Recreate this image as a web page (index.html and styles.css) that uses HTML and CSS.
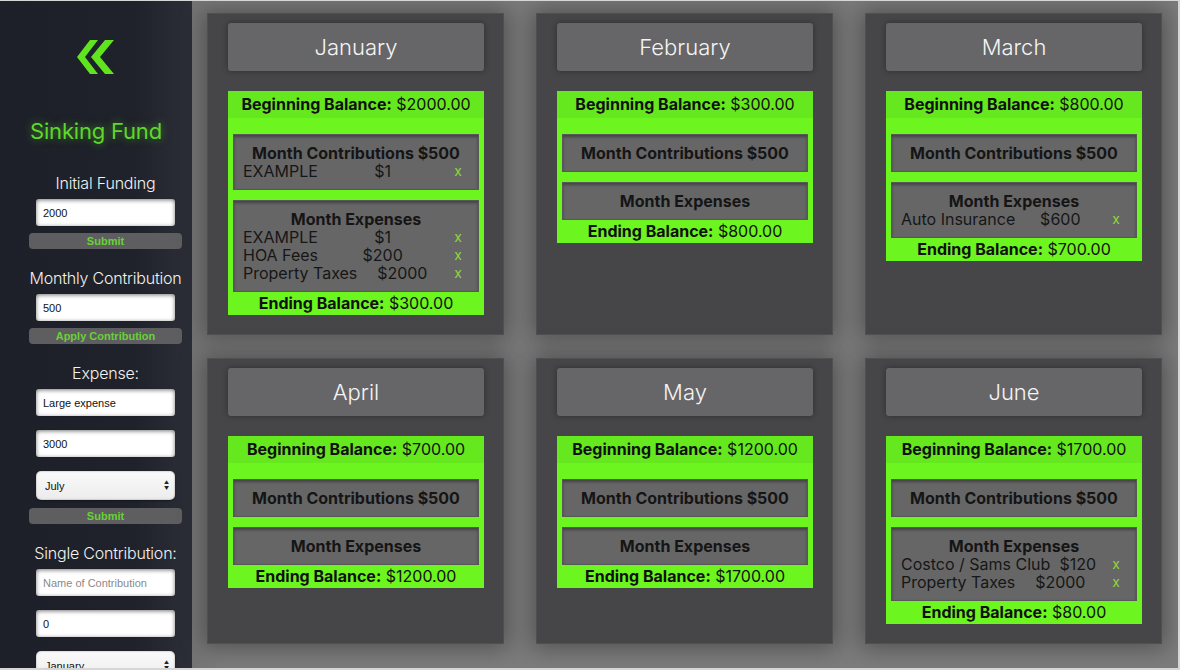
FILE: index.html
```html
<!DOCTYPE html>
<html lang="en">
<head>
<meta charset="utf-8">
<title>Sinking Fund</title>
<link rel="stylesheet" href="styles.css">
</head>
<body>
<div class="app">
  <aside class="sidebar">
    <div class="logo">
      <svg width="38" height="34" viewBox="0 0 38 34" aria-hidden="true">
        <polygon points="13,0 21,0 8,17 21,34 13,34 0,17" fill="#5fe41f"/>
        <polygon points="28,0 37,0 23,17 37,34 28,34 14,17" fill="#5fe41f"/>
      </svg>
    </div>
    <h1 class="brand">Sinking Fund</h1>
    <form class="form">
      <label class="label first">Initial Funding</label>
      <input class="field" type="text" value="2000">
      <button type="button" class="btn">Submit</button>

      <label class="label">Monthly Contribution</label>
      <input class="field" type="text" value="500">
      <button type="button" class="btn">Apply Contribution</button>

      <label class="label">Expense:</label>
      <input class="field" type="text" value="Large expense">
      <input class="field spaced" type="text" value="3000">
      <div class="select-wrap spaced">
        <select class="select"><option>July</option></select>
        <span class="arrows">&#9650;<br>&#9660;</span>
      </div>
      <button type="button" class="btn btn-after-select">Submit</button>

      <label class="label">Single Contribution:</label>
      <input class="field" type="text" placeholder="Name of Contribution">
      <input class="field spaced" type="text" value="0">
      <div class="select-wrap spaced">
        <select class="select"><option>January</option></select>
        <span class="arrows">&#9650;<br>&#9660;</span>
      </div>
    </form>
  </aside>

  <main class="main">
    <section class="card">
      <h2 class="month">January</h2>
      <div class="ledger">
        <div class="begin"><b>Beginning Balance:</b> $2000.00</div>
        <div class="box first-box">
          <div class="box-title">Month Contributions $500</div>
          <div class="row"><span>EXAMPLE</span><span>$1</span><span class="del">x</span></div>
        </div>
        <div class="box">
          <div class="box-title">Month Expenses</div>
          <div class="row"><span>EXAMPLE</span><span>$1</span><span class="del">x</span></div>
          <div class="row"><span>HOA Fees</span><span>$200</span><span class="del">x</span></div>
          <div class="row"><span>Property Taxes</span><span>$2000</span><span class="del">x</span></div>
        </div>
        <div class="end"><b>Ending Balance:</b> $300.00</div>
      </div>
    </section>

    <section class="card">
      <h2 class="month">February</h2>
      <div class="ledger">
        <div class="begin"><b>Beginning Balance:</b> $300.00</div>
        <div class="box first-box">
          <div class="box-title">Month Contributions $500</div>
        </div>
        <div class="box">
          <div class="box-title">Month Expenses</div>
        </div>
        <div class="end"><b>Ending Balance:</b> $800.00</div>
      </div>
    </section>

    <section class="card">
      <h2 class="month">March</h2>
      <div class="ledger">
        <div class="begin"><b>Beginning Balance:</b> $800.00</div>
        <div class="box first-box">
          <div class="box-title">Month Contributions $500</div>
        </div>
        <div class="box">
          <div class="box-title">Month Expenses</div>
          <div class="row"><span>Auto Insurance</span><span>$600</span><span class="del">x</span></div>
        </div>
        <div class="end"><b>Ending Balance:</b> $700.00</div>
      </div>
    </section>

    <section class="card">
      <h2 class="month">April</h2>
      <div class="ledger">
        <div class="begin"><b>Beginning Balance:</b> $700.00</div>
        <div class="box first-box">
          <div class="box-title">Month Contributions $500</div>
        </div>
        <div class="box">
          <div class="box-title">Month Expenses</div>
        </div>
        <div class="end"><b>Ending Balance:</b> $1200.00</div>
      </div>
    </section>

    <section class="card">
      <h2 class="month">May</h2>
      <div class="ledger">
        <div class="begin"><b>Beginning Balance:</b> $1200.00</div>
        <div class="box first-box">
          <div class="box-title">Month Contributions $500</div>
        </div>
        <div class="box">
          <div class="box-title">Month Expenses</div>
        </div>
        <div class="end"><b>Ending Balance:</b> $1700.00</div>
      </div>
    </section>

    <section class="card">
      <h2 class="month">June</h2>
      <div class="ledger">
        <div class="begin"><b>Beginning Balance:</b> $1700.00</div>
        <div class="box first-box">
          <div class="box-title">Month Contributions $500</div>
        </div>
        <div class="box">
          <div class="box-title">Month Expenses</div>
          <div class="row"><span>Costco / Sams Club</span><span>$120</span><span class="del">x</span></div>
          <div class="row"><span>Property Taxes</span><span>$2000</span><span class="del">x</span></div>
        </div>
        <div class="end"><b>Ending Balance:</b> $80.00</div>
      </div>
    </section>
  </main>
</div>
</body>
</html>
```

FILE: styles.css
```css
* { box-sizing: border-box; }

html, body {
  margin: 0;
  padding: 0;
}

body {
  background: #d6d6d6;
  font-family: "Inter", "Noto Sans", sans-serif;
  width: 1180px;
  height: 670px;
  overflow: hidden;
}

.app {
  display: flex;
  width: 1178px;
  height: 667px;
  margin-top: 1px;
  overflow: hidden;
  background: #7a7a7a;
}

/* ---------- Sidebar ---------- */
.sidebar {
  width: 192px;
  flex: 0 0 192px;
  height: 100%;
  overflow: hidden;
  background: linear-gradient(to right, #1d2028 0%, #1f222a 70%, #2c2f37 100%);
  display: flex;
  flex-direction: column;
  align-items: center;
}

.logo {
  margin-top: 39px;
  width: 38px;
  height: 34px;
  margin-left: -1px;
}
.logo svg { display: block; }

.brand {
  margin: 44px 0 0 0;
  font-size: 22px;
  line-height: 26px;
  font-weight: 400;
  color: #5fd82c;
  text-shadow: 0 0 8px rgba(95, 230, 40, 0.55);
  letter-spacing: -0.2px;
}

.form {
  align-self: flex-start;
  margin-left: 29px;
  width: 153px;
  display: flex;
  flex-direction: column;
  align-items: center;
}

.label {
  display: block;
  width: 100%;
  text-align: center;
  color: #f2f2f2;
  font-size: 16px;
  line-height: 20px;
  font-weight: 300;
  white-space: nowrap;
  margin-top: 19px;
  letter-spacing: -0.2px;
}
.label.first { margin-top: 29px; }

.field {
  display: block;
  width: 139px;
  height: 27px;
  margin-top: 6px;
  border: none;
  border-radius: 3px;
  background: #ffffff;
  box-shadow: inset 0 1px 4px rgba(0, 0, 0, 0.55), 0 0 1px rgba(0,0,0,.4);
  padding: 0 7px;
  font-family: "Liberation Sans", Arial, sans-serif;
  font-size: 11px;
  color: #111;
  outline: none;
}
.field::placeholder { color: #8a8a8a; }
.field.spaced { margin-top: 14px; }

.select-wrap {
  position: relative;
  width: 139px;
  height: 29px;
}
.select-wrap.spaced { margin-top: 14px; }

.select {
  appearance: none;
  -webkit-appearance: none;
  width: 100%;
  height: 100%;
  border: none;
  border-radius: 5px;
  background: linear-gradient(#fafafa, #ececec);
  box-shadow: inset 0 0 2px rgba(0,0,0,0.4), 0 1px 2px rgba(0,0,0,0.4);
  padding: 0 9px;
  font-family: "Liberation Sans", Arial, sans-serif;
  font-size: 11px;
  color: #111;
}

.arrows {
  position: absolute;
  right: 6px;
  top: 8px;
  font-size: 5px;
  line-height: 6px;
  color: #222;
  pointer-events: none;
}

.btn {
  display: block;
  width: 153px;
  height: 16px;
  margin-top: 7px;
  border: none;
  border-radius: 4px;
  background: #5e5e60;
  color: #68d235;
  font-family: "Liberation Sans", Arial, sans-serif;
  font-weight: 700;
  font-size: 11px;
  line-height: 16px;
  padding: 0;
}
.btn.btn-after-select { margin-top: 8px; }

/* ---------- Main ---------- */
.main {
  flex: 1;
  height: 100%;
  padding: 12px 16px 0 15px;
  display: grid;
  grid-template-columns: repeat(3, 297px);
  column-gap: 32px;
  row-gap: 23px;
  align-content: start;
  background:
    linear-gradient(to right, rgba(0,0,0,0.06), rgba(0,0,0,0) 30px),
    #7c7c7c;
}

.card {
  background: #464648;
  padding: 10px 20px 20px 21px;
  box-shadow: inset 0 0 0 1px #505052, 0 0 22px 4px rgba(0, 0, 0, 0.35);
  display: flex;
  flex-direction: column;
}

.month {
  margin: 0;
  height: 48px;
  line-height: 48px;
  text-align: center;
  background: #666668;
  border-radius: 3px;
  box-shadow: 0 0 6px rgba(0, 0, 0, 0.35);
  color: #f4f4f4;
  font-size: 22px;
  font-weight: 300;
}

.ledger {
  margin-top: 20px;
  background: #6cf51f;
  padding: 0 5px;
  color: #111;
}

.begin {
  margin: 0 -5px;
  height: 27px;
  line-height: 27px;
  text-align: center;
  font-size: 16px;
  background: #66e81e;
}

.begin b, .end b { font-weight: 700; }

.box {
  margin-top: 10px;
  background: #666667;
  border: 1px solid #58585a;
  box-shadow: inset 0 2px 3px rgba(0, 0, 0, 0.35);
  padding: 9px 9px 9px;
  font-size: 16px;
  line-height: 18px;
}
.box.first-box { margin-top: 16px; }

.box-title {
  text-align: center;
  font-weight: 700;
  color: #151515;
}

.row {
  display: flex;
  justify-content: space-between;
  padding-right: 7px;
  color: #161616;
  font-weight: 400;
}

.del {
  padding-left: 7px;
  color: #8ed63c;
  font-size: 14px;
}

.end {
  height: 23px;
  line-height: 22px;
  text-align: center;
  font-size: 16px;
}
```
